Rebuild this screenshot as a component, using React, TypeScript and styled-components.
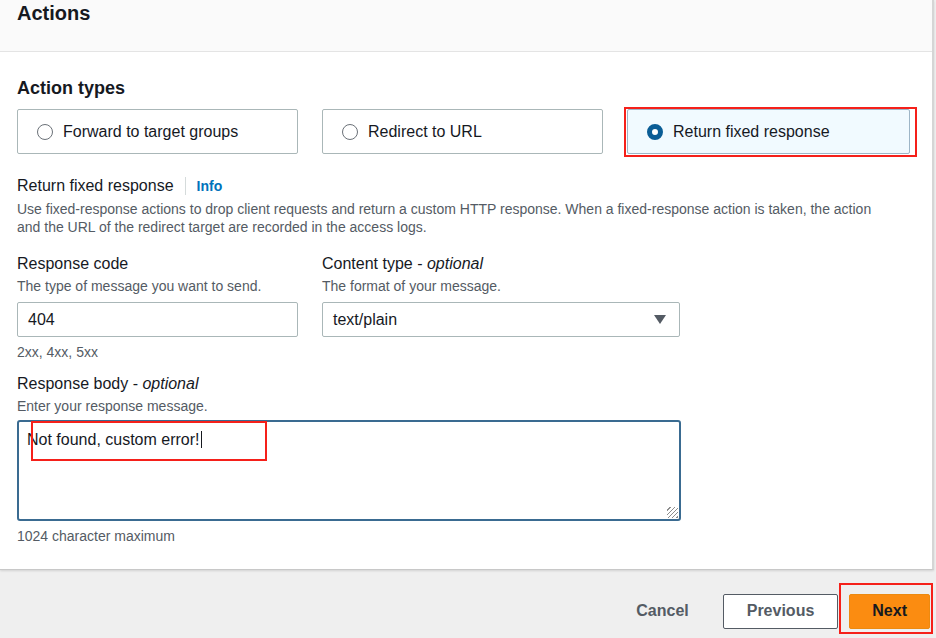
import styled, { createGlobalStyle } from 'styled-components';

const GlobalStyle = createGlobalStyle`
  html, body {
    margin: 0;
    padding: 0;
    background: #efefef;
  }
  body {
    font-family: "Liberation Sans", Arial, sans-serif;
    color: #16191f;
  }
  * {
    box-sizing: border-box;
  }
`;

const Page = styled.div`
  width: 936px;
  height: 638px;
  overflow: hidden;
  display: flex;
  flex-direction: column;
`;

const Panel = styled.section`
  width: 934px;
  background: #fff;
  border-right: 2px solid #d5d5d5;
  border-bottom: 1px solid #c8c8c8;
  box-shadow: 0 1px 2px rgba(0, 0, 0, 0.12);
`;

const PanelHeader = styled.header`
  height: 52px;
  background: #fafafa;
  border-bottom: 1px solid #e4e4e4;
  padding: 1px 17px 0;
`;

const PanelTitle = styled.h2`
  margin: 0;
  font-size: 20px;
  line-height: 24px;
  font-weight: 700;
`;

const PanelBody = styled.div`
  padding: 25px 17px 25px;
`;

const SectionTitle = styled.h3`
  margin: 0 0 10px;
  font-size: 18px;
  line-height: 22px;
  font-weight: 700;
`;

const TileGrid = styled.div`
  display: grid;
  grid-template-columns: 281px 281px 283px;
  gap: 24px;
`;

const Tile = styled.div<{ $selected?: boolean }>`
  position: relative;
  height: 45px;
  display: flex;
  align-items: center;
  gap: 10px;
  padding-left: 19px;
  border: 1px solid ${({ $selected }) => ($selected ? '#9db5c7' : '#aab7b8')};
  border-radius: 2px;
  background: ${({ $selected }) => ($selected ? '#f1faff' : '#fff')};
  font-size: 16px;
  color: #16191f;
`;

const Radio = styled.span<{ $checked?: boolean }>`
  width: 16px;
  height: 16px;
  border-radius: 50%;
  flex: none;
  background: #fff;
  border: ${({ $checked }) => ($checked ? '5px solid #0a5d96' : '1.5px solid #6b7178')};
`;

const RedMark = styled.span<{ $t: number; $r: number; $b: number; $l: number }>`
  position: absolute;
  top: ${({ $t }) => $t}px;
  right: ${({ $r }) => $r}px;
  bottom: ${({ $b }) => $b}px;
  left: ${({ $l }) => $l}px;
  border: 2px solid #f5201a;
  pointer-events: none;
`;

const LabelRow = styled.div`
  margin-top: 21px;
  display: flex;
  align-items: center;
  font-size: 16px;
  line-height: 22px;
`;

const InfoLink = styled.a`
  margin-left: 11px;
  padding-left: 11px;
  border-left: 1px solid #d5dbdb;
  line-height: 18px;
  font-size: 14px;
  font-weight: 700;
  color: #0073bb;
  text-decoration: none;
`;

const Description = styled.p<{ $mt?: number }>`
  margin: ${({ $mt }) => $mt ?? 2}px 0 0;
  max-width: 876px;
  font-size: 14px;
  line-height: 18px;
  color: #545b64;
`;

const FieldRow = styled.div`
  margin-top: 17px;
  display: grid;
  grid-template-columns: 281px 358px;
  gap: 24px;
`;

const Field = styled.div<{ $mt?: number }>`
  margin-top: ${({ $mt }) => $mt ?? 0}px;
`;

const Label = styled.div`
  font-size: 16px;
  line-height: 22px;
  color: #16191f;

  em {
    font-style: italic;
  }
`;

const InputBox = styled.div`
  margin-top: 7px;
  height: 35px;
  border: 1px solid #aab7b8;
  border-radius: 2px;
  display: flex;
  align-items: center;
  justify-content: space-between;
  padding: 0 13px 0 10px;
  font-size: 16px;
  color: #16191f;
`;

const Constraint = styled.div`
  margin-top: 7px;
  font-size: 14px;
  line-height: 16px;
  color: #545b64;
`;

const TextAreaBox = styled.div`
  position: relative;
  margin-top: 5px;
  width: 664px;
  height: 101px;
  border: 2px solid #3a6b91;
  border-radius: 3px;
  padding: 7px 8px;
  font-size: 16px;
  line-height: 22px;
  background:
    repeating-linear-gradient(135deg, transparent 0 2px, #8d8d8d 2px 3px) no-repeat right 1px bottom 1px / 11px 11px,
    #fff;
`;

const Caret = styled.span`
  display: inline-block;
  width: 1px;
  height: 17px;
  margin-left: 1px;
  vertical-align: -3px;
  background: #16191f;
`;

const Footer = styled.footer`
  flex: 1;
  display: flex;
  align-items: center;
  justify-content: flex-end;
  padding: 14px 6px 0 0;
`;

const LinkButton = styled.button`
  border: none;
  background: none;
  padding: 0;
  margin-right: 34px;
  font-family: inherit;
  font-size: 16px;
  font-weight: 700;
  color: #545b64;
`;

const Button = styled.button<{ $primary?: boolean }>`
  position: relative;
  height: 35px;
  margin-left: ${({ $primary }) => ($primary ? 11 : 0)}px;
  padding: 0 ${({ $primary }) => ($primary ? 22 : 23)}px;
  border-radius: 2px;
  border: 1px solid ${({ $primary }) => ($primary ? '#ec8a10' : '#545b64')};
  background: ${({ $primary }) => ($primary ? '#fb8c11' : '#fff')};
  font-family: inherit;
  font-size: 16px;
  font-weight: 700;
  color: ${({ $primary }) => ($primary ? '#16191f' : '#545b64')};
`;

export default function App() {
  return (
    <Page>
      <GlobalStyle />
      <Panel>
        <PanelHeader>
          <PanelTitle>Actions</PanelTitle>
        </PanelHeader>
        <PanelBody>
          <SectionTitle>Action types</SectionTitle>
          <TileGrid>
            <Tile>
              <Radio />
              Forward to target groups
            </Tile>
            <Tile>
              <Radio />
              Redirect to URL
            </Tile>
            <Tile $selected>
              <Radio $checked />
              Return fixed response
              <RedMark $t={-3} $r={-8} $b={-4} $l={-4} />
            </Tile>
          </TileGrid>

          <LabelRow>
            Return fixed response
            <InfoLink href="#">Info</InfoLink>
          </LabelRow>
          <Description $mt={3}>
            Use fixed-response actions to drop client requests and return a custom HTTP response. When a
            fixed-response action is taken, the action and the URL of the redirect target are recorded in the
            access logs.
          </Description>

          <FieldRow>
            <Field>
              <Label>Response code</Label>
              <Description>The type of message you want to send.</Description>
              <InputBox>404</InputBox>
              <Constraint>2xx, 4xx, 5xx</Constraint>
            </Field>
            <Field>
              <Label>
                Content type - <em>optional</em>
              </Label>
              <Description>The format of your message.</Description>
              <InputBox>
                text/plain
                <svg width="12" height="9" viewBox="0 0 12 9">
                  <path d="M0 0h12L6 9z" fill="#545b64" />
                </svg>
              </InputBox>
            </Field>
          </FieldRow>

          <Field $mt={13}>
            <Label>
              Response body - <em>optional</em>
            </Label>
            <Description>Enter your response message.</Description>
            <TextAreaBox>
              Not found, custom error!
              <Caret />
              <RedMark $t={-1} $r={412} $b={58} $l={12} />
            </TextAreaBox>
            <Constraint>1024 character maximum</Constraint>
          </Field>
        </PanelBody>
      </Panel>
      <Footer>
        <LinkButton>Cancel</LinkButton>
        <Button>Previous</Button>
        <Button $primary>
          Next
          <RedMark $t={-12} $r={-4} $b={-6} $l={-11} />
        </Button>
      </Footer>
    </Page>
  );
}
